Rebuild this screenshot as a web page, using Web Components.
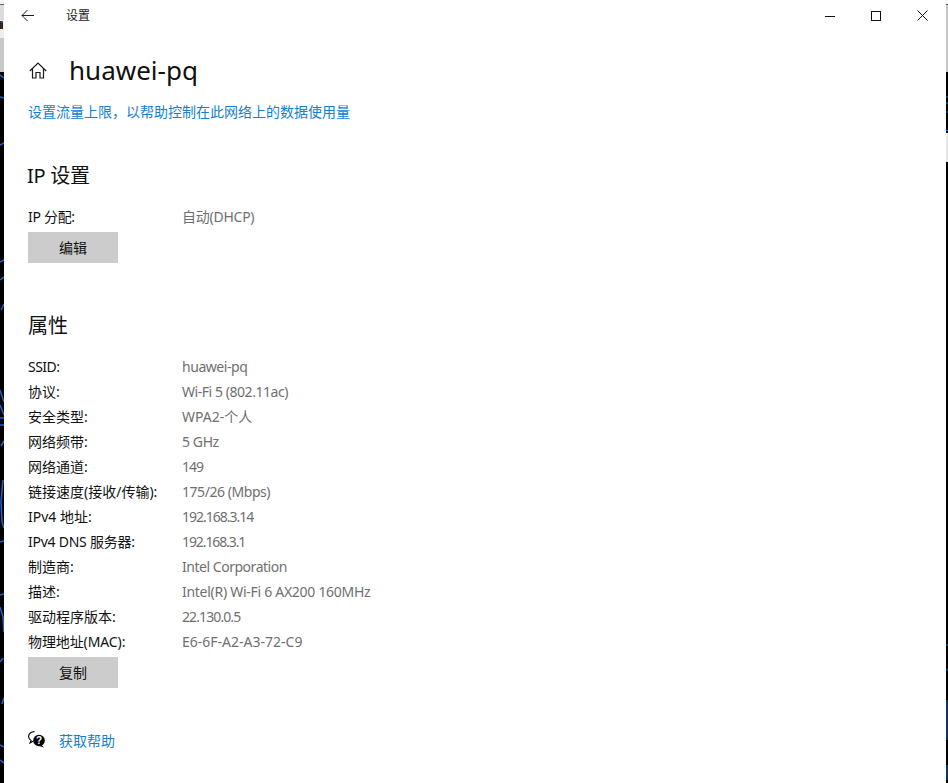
<!DOCTYPE html>
<html lang="zh"><head><meta charset="utf-8">
<style>
html,body{margin:0;height:100%;background:#000;overflow:hidden}
body{font-family:"Noto Sans","Noto Sans CJK SC",sans-serif}
</style></head><body>
<desktop-frame>
  <settings-window>
    <page-title slot="title">huawei-pq</page-title>
    <a-link class="meter">设置流量上限，以帮助控制在此网络上的数据使用量</a-link>
    <section-block heading="IP 设置" class="ip">
      <prop-row label="IP 分配:" ks="-.3" vs="-.25">自动(DHCP)</prop-row>
      <gray-button>编辑</gray-button>
    </section-block>
    <section-block heading="属性" class="props">
      <prop-row label="SSID:" ks="-.5" vs="-.45">huawei-pq</prop-row>
      <prop-row label="协议:" vs="-.45">Wi-Fi 5 (802.11ac)</prop-row>
      <prop-row label="安全类型:">WPA2-个人</prop-row>
      <prop-row label="网络频带:" vs="-.4">5 GHz</prop-row>
      <prop-row label="网络通道:" vs="-1">149</prop-row>
      <prop-row label="链接速度(接收/传输):" vs="-.45">175/26 (Mbps)</prop-row>
      <prop-row label="IPv4 地址:" vs="-1">192.168.3.14</prop-row>
      <prop-row label="IPv4 DNS 服务器:" ks="-.25" vs="-1.1">192.168.3.1</prop-row>
      <prop-row label="制造商:" vs="-.47">Intel Corporation</prop-row>
      <prop-row label="描述:" vs="-.28">Intel(R) Wi-Fi 6 AX200 160MHz</prop-row>
      <prop-row label="驱动程序版本:" vs="-.9">22.130.0.5</prop-row>
      <prop-row label="物理地址(MAC):" ks="-.1">E6-6F-A2-A3-72-C9</prop-row>
      <gray-button>复制</gray-button>
    </section-block>
    <help-link>获取帮助</help-link>
  </settings-window>
</desktop-frame>
<script>
const def=(name,html)=>customElements.define(name,class extends HTMLElement{
  connectedCallback(){ if(this.shadowRoot) return; const r=this.attachShadow({mode:'open'}); r.innerHTML=typeof html==='function'?html(this):html; }
});
def('desktop-frame',`<style>
:host{display:flex;width:948px;height:783px;background:#000}
.l{width:4px;flex:none}
.r{width:2px;flex:none}
svg{display:block}
</style>
<div class="l"><svg width="4" height="783">
<rect width="4" height="783" fill="#000"/>
<rect y="0" width="4" height="4" fill="#f4f4f4"/><rect y="4" width="4" height="1" fill="#666"/>
<rect y="5" width="4" height="15" fill="#dcdcdc"/>
<rect y="20" width="4" height="18" fill="#eee"/>
<rect y="21" width="3" height="8" fill="#3a2412"/><rect y="21" x="1" width="2" height="2" fill="#2b4fb0"/>
<rect y="38" width="4" height="34" fill="#c8c8c8"/>
<g stroke="#1f62d0" stroke-width="1.500" fill="none">
<path d="M0 75l4 3M0 97l4 1M0 145l4-2M0 262l4-2M0 280l4-3M1 310l3-6M0 390l4 12M0 405l4 10M0 418h4M0 425h4M1 446l3-5M3 480l-2 22 1 20 2 6M0 542l4-1M0 595l4-1M0 607l3 10 1 15M3 658l-3 4M2 704l2-6M0 745l4 2M0 760l4 3"/>
</g></svg></div>
<slot></slot>
<div class="r"><svg width="2" height="783">
<rect width="2" height="783" fill="#000"/>
<rect y="0" width="2" height="4" fill="#f0f0f0"/><rect y="4" width="2" height="1" fill="#555"/>
<rect y="5" width="2" height="67" fill="#c6c6c6"/>
<rect y="133" width="2" height="29" fill="#e8e8e8"/>
<path d="M0 97h2M0 103h2M0 112h2M0 130.500h2M0 645h2M0 670h2M1 700v40M1 765v15" stroke="#1f62d0" fill="none"/>
</svg></div>`);
def('settings-window',`<style>
:host{display:flex;flex-direction:column;flex:1;min-width:0;background:#fff;color:#000;box-sizing:border-box;font-size:14px}
.bar{height:31px;display:flex;align-items:center;flex:none}
.back{width:48px;display:flex;justify-content:center;margin-right:14px;box-sizing:border-box}
.cap{font-size:12px;color:#1a1a1a;flex:1;padding-bottom:1px}
.ctl{width:46px;height:31px;display:flex;align-items:center;justify-content:center}
.ctls{display:flex;margin-right:1px}
.body{padding:0 24px;display:flex;flex-direction:column;flex:1}
svg{display:block}
</style>
<div class="bar">
 <div class="back"><svg width="14" height="13" viewBox="0 0 14 13" fill="none" stroke="#1a1a1a"><path d="M13 6.5H1M6.5 1L1 6.5L6.5 12"/></svg></div>
 <div class="cap">设置</div>
 <div class="ctls">
  <div class="ctl"><svg width="10" height="10"><path d="M0 5.5H10" stroke="#111"/></svg></div>
  <div class="ctl"><svg width="10" height="10"><rect x=".5" y=".5" width="9" height="9" fill="none" stroke="#111"/></svg></div>
  <div class="ctl"><svg width="11" height="11"><path d="M.5 .5L10.5 10.5M10.5 .5L.5 10.5" stroke="#111" fill="none"/></svg></div>
 </div>
</div>
<div class="body"><slot name="title"></slot><slot></slot></div>`);
def('page-title',`<style>
:host{display:flex;align-items:center;height:42px;margin-top:18px;font-size:26px;color:#111}
svg{display:block;margin-right:22px;margin-left:1px}
</style><svg width="18" height="17" viewBox="0 0 18 17" fill="none" stroke="#1a1a1a" stroke-width="1.2"><path d="M.8 9L9 1l8.2 8M3.5 6.8V16H7v-5.5h4V16h3.5V6.8"/></svg><slot></slot>`);
def('a-link',`<style>
:host{display:block;font-size:14px;line-height:20px;height:20px;margin-top:11px;color:#1580d0}
</style><slot></slot>`);
def('section-block',h=>`<style>
:host{display:block}
:host(.ip){margin-top:40px}
:host(.props){margin-top:49px}
h2{margin:0;font-size:20px;font-weight:400;line-height:28px;color:#111}
:host(.ip) h2{margin-left:-1px;margin-bottom:14px;letter-spacing:-.3px}
:host(.props) h2{margin-bottom:14px}
</style><h2>${h.getAttribute('heading')}</h2><slot></slot>`);
def('prop-row',h=>`<style>
:host{display:flex;height:25px;line-height:25px;font-size:14px;color:#111}
.k{width:154px;flex:none;white-space:nowrap;letter-spacing:${h.getAttribute('ks')||0}px}
.v{color:#6f6f6f;white-space:nowrap;letter-spacing:${h.getAttribute('vs')||0}px}
</style><div class="k">${h.getAttribute('label')}</div><div class="v"><slot></slot></div>`);
def('gray-button',`<style>
:host{display:flex;box-sizing:border-box;width:90px;height:31px;padding-bottom:2px;background:#ccc;align-items:center;justify-content:center;font-size:14px;color:#111;margin-top:3px}
</style><slot></slot>`);
def('help-link',`<style>
:host{display:flex;align-items:center;height:20px;margin-top:42px;font-size:14px;color:#1580d0}
svg{display:block;margin-right:14px;margin-top:-2px}
</style><svg width="17" height="17" viewBox="0 0 17 17">
<path d="M6.5 .6C3.2.6.6 2.7.6 5.4c0 1.7 1 3.100 2.500 4L2 12l3.500-2" fill="#fff" stroke="#000" stroke-width="1.100"/>
<circle cx="11" cy="9.500" r="5.800" fill="#000"/><path d="M13.500 14l2.500 2.500-5-1.500z" fill="#000"/>
<text x="11" y="13" text-anchor="middle" font-size="10" font-weight="700" fill="#fff" font-family="Liberation Sans">?</text></svg><slot></slot>`);
</script>
</body></html>
